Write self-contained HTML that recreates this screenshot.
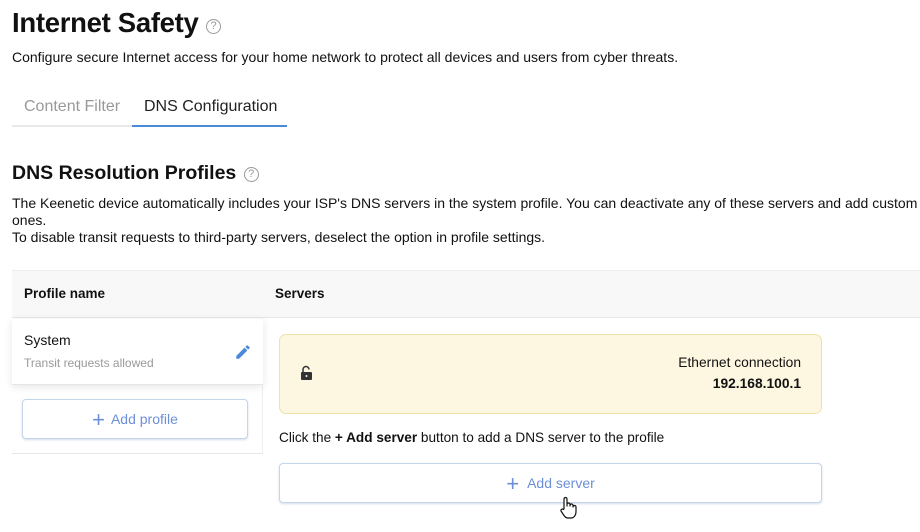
<!DOCTYPE html>
<html><head><meta charset="utf-8"><style>
*{box-sizing:border-box;margin:0;padding:0}
body{width:920px;height:532px;overflow:hidden;background:#fff;font-family:"Liberation Sans",Arial,sans-serif;color:#111;position:relative}
.a{position:absolute;white-space:nowrap}
.q{display:inline-block;border:1.6px solid #999;border-radius:50%;color:#999;font-weight:normal;text-align:center}
.btn{position:absolute;border:1px solid #c5d6ea;border-radius:4px;background:#fff;color:#6d8fd8;font-size:14px;text-align:center;box-shadow:0 1px 2px rgba(80,120,180,.25)}
</style></head><body>
<div class="a" style="left:12px;top:7px;font-size:27.5px;font-weight:bold;letter-spacing:-0.3px">Internet Safety <span class="q" style="width:15px;height:15px;font-size:11px;line-height:12px;vertical-align:3px">?</span></div>
<div class="a" style="left:12px;top:49px;font-size:14px">Configure secure Internet access for your home network to protect all devices and users from cyber threats.</div>
<div class="a" style="left:24px;top:98px;font-size:16px;color:#999">Content Filter</div>
<div class="a" style="left:144px;top:98px;font-size:16px;color:#222">DNS Configuration</div>
<div class="a" style="left:12px;top:125px;width:120px;height:2px;background:#e8e8e8"></div>
<div class="a" style="left:132px;top:125px;width:155px;height:2px;background:#4a8ad8"></div>
<div class="a" style="left:12px;top:162px;font-size:19.5px;font-weight:bold">DNS Resolution Profiles <span class="q" style="width:15px;height:15px;font-size:11px;line-height:12px;vertical-align:2px;margin-left:2px">?</span></div>
<div class="a" style="left:12px;top:195px;font-size:14px;line-height:17px;white-space:normal;width:908px">The Keenetic device automatically includes your ISP's DNS servers in the system profile. You can deactivate any of these servers and add custom ones.<br>To disable transit requests to third-party servers, deselect the option in profile settings.</div>
<div class="a" style="left:12px;top:270px;width:908px;height:48px;background:#f8f8f8;border-top:1px solid #eee;border-bottom:1px solid #e6e6e6"></div>
<div class="a" style="left:24px;top:286px;font-size:13.5px;font-weight:bold">Profile name</div>
<div class="a" style="left:275px;top:286px;font-size:13.5px;font-weight:bold">Servers</div>
<div class="a" style="left:12px;top:318px;width:251px;height:136px;border-right:1px solid #eee;border-bottom:1px solid #e6e6e6"></div>
<div class="a" style="left:12px;top:319px;width:251px;height:66px;background:#fff;box-shadow:0 2px 8px rgba(0,0,0,.1);border-bottom:1px solid #e6e6e6"></div>
<div class="a" style="left:24px;top:332px;font-size:14px">System</div>
<div class="a" style="left:24px;top:356px;font-size:12px;color:#999">Transit requests allowed</div>
<svg class="a" style="left:234px;top:343px" width="18" height="18" viewBox="0 0 24 24"><path fill="#4a8ad8" d="M3 17.25V21h3.75L17.81 9.94l-3.75-3.75L3 17.25zM20.71 7.04a1 1 0 000-1.41l-2.34-2.34a1 1 0 00-1.41 0l-1.83 1.83 3.75 3.75 1.83-1.83z"/></svg>
<div class="btn" style="left:22px;top:399px;width:226px;height:40px;line-height:38px"><span style="font-size:22px;font-weight:300;vertical-align:-3px;margin-right:6px">+</span>Add profile</div>
<div class="a" style="left:279px;top:334px;width:543px;height:80px;background:#fdf7e1;border:1px solid #efe2a9;border-radius:7px"></div>
<svg class="a" style="left:300px;top:365px" width="13" height="15" viewBox="0 0 13 15"><path d="M3 7V4.5a3 3 0 016 0" fill="none" stroke="#333" stroke-width="1.5"/><rect x="1" y="7" width="11" height="8" rx="1" fill="#333"/><circle cx="6.5" cy="11" r="1" fill="#fdf7e1"/></svg>
<div class="a" style="left:560px;top:355px;width:241px;text-align:right;font-size:13.8px">Ethernet connection</div>
<div class="a" style="left:560px;top:376px;width:241px;text-align:right;font-size:13.8px;font-weight:bold">192.168.100.1</div>
<div class="a" style="left:279px;top:430px;font-size:13.6px">Click the <b>+ Add server</b> button to add a DNS server to the profile</div>
<div class="btn" style="left:279px;top:463px;width:543px;height:40px;line-height:38px"><span style="font-size:22px;font-weight:300;vertical-align:-3px;margin-right:8px">+</span>Add server</div>
<svg class="a" style="left:559px;top:496px" width="18" height="24" viewBox="0 0 18 24"><path d="M5 13V3a1.5 1.5 0 013 0v7V8.5a1.5 1.5 0 013 0V10V9.5a1.5 1.5 0 013 0V11a1.5 1.5 0 013 0v5c0 3-2 6-5 6H9c-2 0-3-1-4-2.5L2 15a1.5 1.5 0 012.5-1.5z" fill="#fff" stroke="#111" stroke-width="1.2" stroke-linejoin="round"/></svg>
</body></html>
